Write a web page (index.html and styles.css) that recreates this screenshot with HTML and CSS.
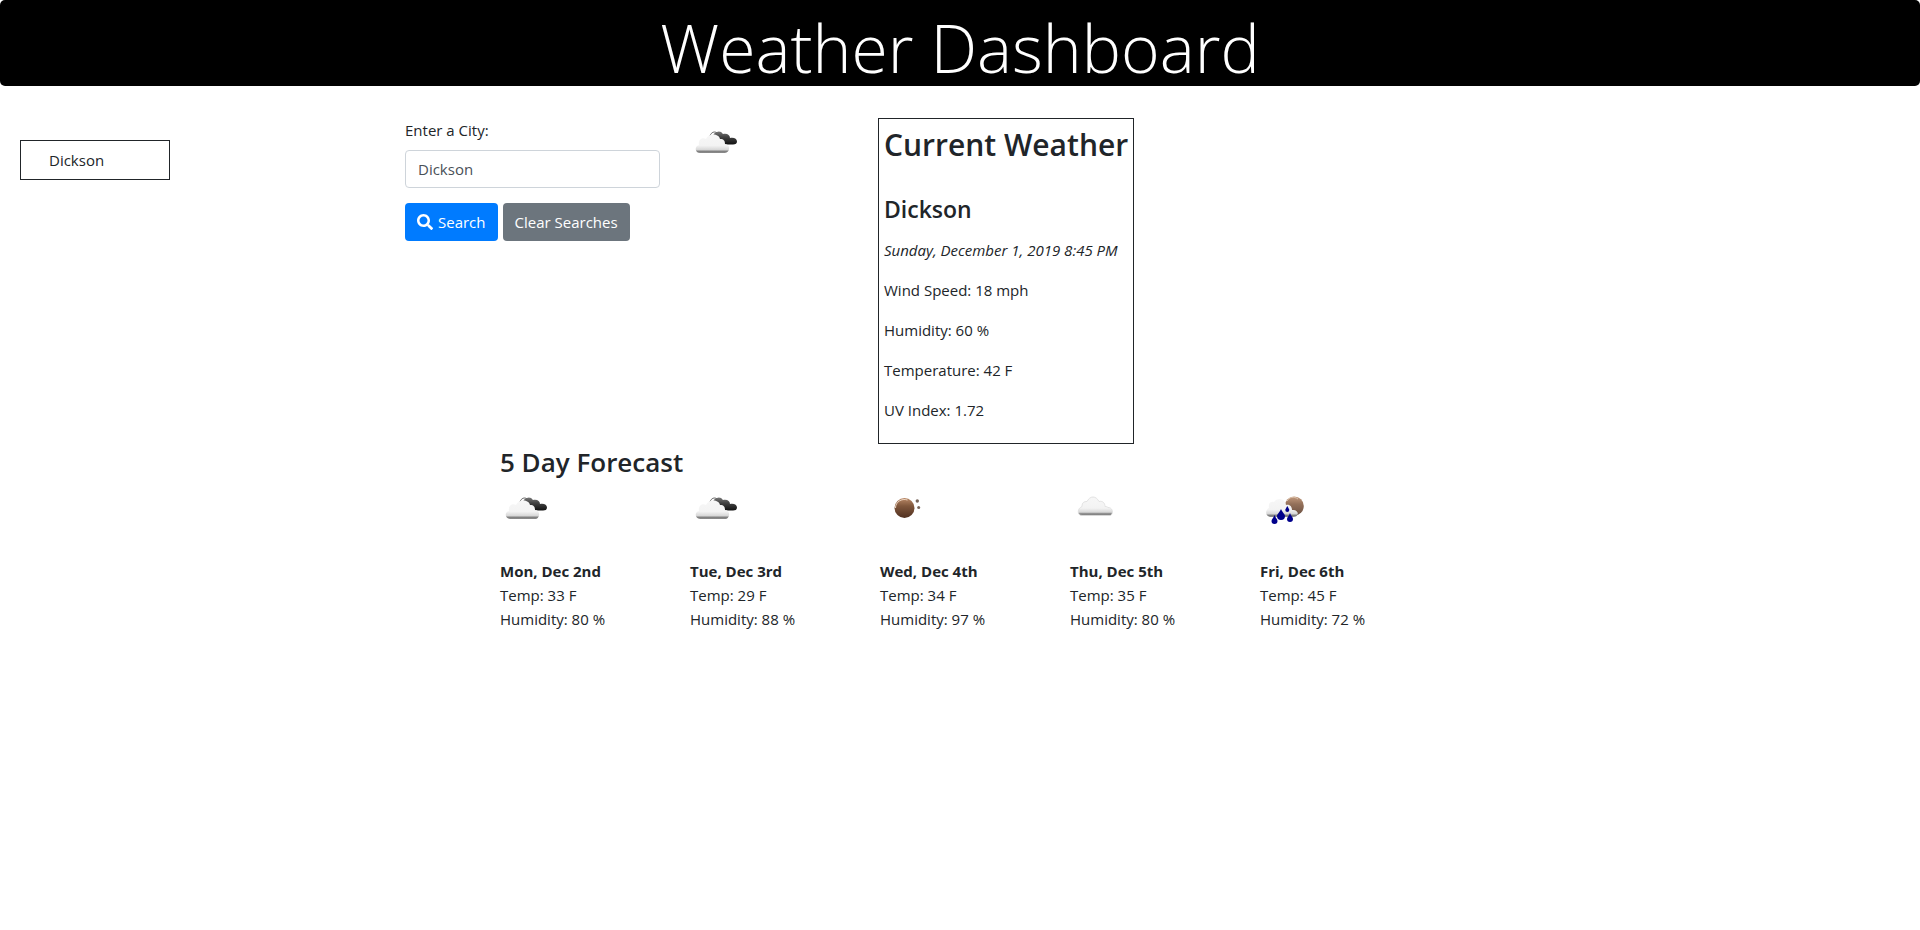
FILE: index.html
```html
<!DOCTYPE html>
<html lang="en">
<head>
<meta charset="utf-8">
<title>Weather Dashboard</title>
<link rel="stylesheet" href="styles.css">
</head>
<body>
<svg class="defs" aria-hidden="true">
  <defs>
    <linearGradient id="white" x1="0" y1="0" x2="0" y2="1">
      <stop offset="0" stop-color="#f7f7f7"/><stop offset=".6" stop-color="#f3f3f3"/><stop offset=".82" stop-color="#d8d8d8"/><stop offset=".91" stop-color="#808080"/><stop offset="1" stop-color="#8c8c8c"/>
    </linearGradient>
    <linearGradient id="dark" x1="0" y1="0" x2="0" y2="1">
      <stop offset="0" stop-color="#777"/><stop offset=".4" stop-color="#444"/><stop offset="1" stop-color="#111"/>
    </linearGradient>
    <linearGradient id="brown" x1="0" y1="0" x2="0" y2="1">
      <stop offset="0" stop-color="#b98866"/><stop offset=".4" stop-color="#80573c"/><stop offset="1" stop-color="#503020"/>
    </linearGradient>
    <symbol id="broken" viewBox="0 0 50 50">
      <path d="M23 19a5.500 5.500 0 0 1 10-3c4-1 7 1 7 4c4-1 7 1 7 3.500q0 3-4 3h-8q-3 0-4-2.500q-5 0-8-5z" fill="url(#dark)"/>
      <path d="M20 18c1-4 5-5 7-3" fill="none" stroke="#666" stroke-width="1"/>
      <path d="M10 35c-5 0-6-7-1-8-1-5 3-8 7-6 2-6 13-6 14 0 4 0 5 2 5 5 6 0 5 9 0 9z" fill="url(#white)"/>
    </symbol>
    <symbol id="clear" viewBox="0 0 50 50">
      <circle cx="24.500" cy="24" r="10" fill="url(#brown)"/>
      <path d="M15.500 24c0-6 6-10 12-8" fill="none" stroke="#ecd5c2" stroke-width="1"/>
      <circle cx="37.300" cy="17" r="1.700" fill="#77655a"/><circle cx="38.700" cy="23.500" r="1.500" fill="#77655a"/>
    </symbol>
    <symbol id="cloud" viewBox="0 0 50 50">
      <path d="M12 31.500c-5 0-5-7 0-9 0-4 2-5 5-5 3-6 9-6 12 0 4-1 6 2 6 5 1 0 2 0 3 1 6 0 5 8 2 8z" fill="url(#white)" stroke="#dcdcdc" stroke-width=".8"/>
    </symbol>
    <symbol id="rain" viewBox="0 0 50 50">
      <circle cx="34.300" cy="22" r="9.500" fill="url(#brown)" opacity=".85"/>
      <path d="M27 17c2-4 7-5 11-2" fill="none" stroke="#ddc5af" stroke-width="1"/>
      <path d="M10 33c-5-1-5-7-1-9-1-5 2-7 5-6 3-5 11-4 12 3 4-1 6 2 6 5 7-1 8 7 1 7z" fill="url(#white)"/>
      <g fill="#00008b"><path d="M14.500 31c1 3 3 4 3 6a3 3 0 0 1-6 0c0-2 2-3 3-6z"/><path d="M21 25c1 3 4 5 4 7a4 4 0 0 1-8 0c0-2 3-4 4-7z"/><path d="M27.300 22c1 2 2 3 2 4a2 2 0 0 1-4 0c0-1 1-2 2-4z"/><path d="M30 29c1 3 3 4 3 6a3 3 0 0 1-6 0c0-2 2-3 3-6z"/></g>
    </symbol>
  </defs>
</svg>
<header class="banner"><h1 class="title">Weather Dashboard</h1></header>
<main class="page">
  <aside class="history"><ul class="cities"><li>Dickson</li></ul></aside>
  <div class="content">
    <div class="top">
      <form class="search">
        <label class="label" for="city">Enter a City:</label>
        <input class="field" id="city" type="text" value="Dickson">
        <div class="actions">
          <button class="btn primary" type="button"><svg class="glass" viewBox="0 0 512 512" aria-hidden="true"><path fill="currentColor" d="M505 442.700L405.300 343c-4.500-4.500-10.600-7-17-7H372c27.600-35.300 44-79.700 44-128C416 93.100 322.900 0 208 0S0 93.100 0 208s93.100 208 208 208c48.300 0 92.700-16.400 128-44v16.300c0 6.400 2.500 12.500 7 17l99.700 99.700c9.400 9.400 24.600 9.400 33.900 0l28.300-28.300c9.400-9.400 9.400-24.600.1-34zM208 336c-70.700 0-128-57.200-128-128 0-70.700 57.200-128 128-128 70.700 0 128 57.200 128 128 0 70.700-57.200 128-128 128z"/></svg>Search</button>
          <button class="btn secondary" type="button">Clear Searches</button>
        </div>
      </form>
      <svg class="icon" role="img" aria-label="Broken clouds"><use href="#broken"/></svg>
      <section class="current">
        <h2 class="heading">Current Weather</h2>
        <h3 class="city">Dickson</h3>
        <p class="line"><em>Sunday, December 1, 2019 8:45 PM</em></p>
        <p class="line">Wind Speed: 18 mph</p>
        <p class="line">Humidity: 60 %</p>
        <p class="line">Temperature: 42 F</p>
        <p class="line">UV Index: 1.72</p>
      </section>
    </div>
    <section class="forecast">
      <h2 class="subheading">5 Day Forecast</h2>
      <div class="days">
        <article class="day"><svg class="icon" role="img" aria-label="Broken clouds"><use href="#broken"/></svg><strong class="date">Mon, Dec 2nd</strong><span>Temp: 33 F</span><span>Humidity: 80 %</span></article>
        <article class="day"><svg class="icon" role="img" aria-label="Broken clouds"><use href="#broken"/></svg><strong class="date">Tue, Dec 3rd</strong><span>Temp: 29 F</span><span>Humidity: 88 %</span></article>
        <article class="day"><svg class="icon" role="img" aria-label="Clear"><use href="#clear"/></svg><strong class="date">Wed, Dec 4th</strong><span>Temp: 34 F</span><span>Humidity: 97 %</span></article>
        <article class="day"><svg class="icon" role="img" aria-label="Cloudy"><use href="#cloud"/></svg><strong class="date">Thu, Dec 5th</strong><span>Temp: 35 F</span><span>Humidity: 80 %</span></article>
        <article class="day"><svg class="icon" role="img" aria-label="Rain"><use href="#rain"/></svg><strong class="date">Fri, Dec 6th</strong><span>Temp: 45 F</span><span>Humidity: 72 %</span></article>
      </div>
    </section>
  </div>
</main>
</body>
</html>
```
FILE: styles.css
```css
* { box-sizing: border-box; }
body {
  margin: 0;
  background: #fff;
  color: #212529;
  font: 400 15px/24px "Open Sans", "Noto Sans", sans-serif;
}
h1, h2, h3, p, ul { margin: 0; }
.defs { position: absolute; width: 0; height: 0; }
.banner {
  padding-top: 8px;
  background: #000;
  color: #fff;
  border-radius: 5px;
  text-align: center;
}
.title { font-size: 66px; font-weight: 300; line-height: 78px; }
.page {
  display: grid;
  grid-template-columns: minmax(0, 1fr) minmax(0, 1140px) minmax(0, 1fr);
  padding-top: 32px;
}
.history { padding: 22px 20px; }
.cities {
  width: 150px;
  padding: 7px 28px;
  border: 1px solid #212529;
  list-style: none;
}
.top {
  display: grid;
  grid-template-columns: 3fr 2fr 7fr;
  align-items: start;
}
.search { padding: 0 15px; }
.label { display: block; margin-bottom: 8px; }
.field {
  display: block;
  width: 100%;
  height: 38px;
  padding: 6px 12px;
  border: 1px solid #ced4da;
  border-radius: 4px;
  color: #495057;
  font: inherit;
}
.actions { display: flex; gap: 5px; margin-top: 15px; }
.btn {
  display: flex;
  align-items: center;
  gap: 5px;
  height: 38px;
  padding: 0 12px;
  border: 0;
  border-radius: 4px;
  color: #fff;
  font: inherit;
  white-space: nowrap;
}
.primary { background: #007bff; }
.secondary { background: #6c757d; }
.glass { width: 16px; height: 16px; }
.icon { display: block; width: 50px; height: 50px; }
.top > .icon { margin-left: 15px; }
.current {
  justify-self: start;
  margin-left: 13px;
  padding: 7px 5px 5px;
  border: 1px solid #212529;
}
.heading { font-size: 30px; font-weight: 600; line-height: 38px; }
.city { margin: 31px 0 15px; font-size: 23px; font-weight: 600; line-height: 28px; }
.line { margin-bottom: 16px; }
.forecast { padding-left: calc(100% / 12); }
.subheading { margin-bottom: 4px; padding: 0 15px; font-size: 26px; font-weight: 600; line-height: 36px; }
.days { display: grid; grid-template-columns: repeat(5, 2fr) 1fr; }
.day { display: flex; flex-direction: column; padding: 0 15px; }
.date { margin-top: 25px; }
```
